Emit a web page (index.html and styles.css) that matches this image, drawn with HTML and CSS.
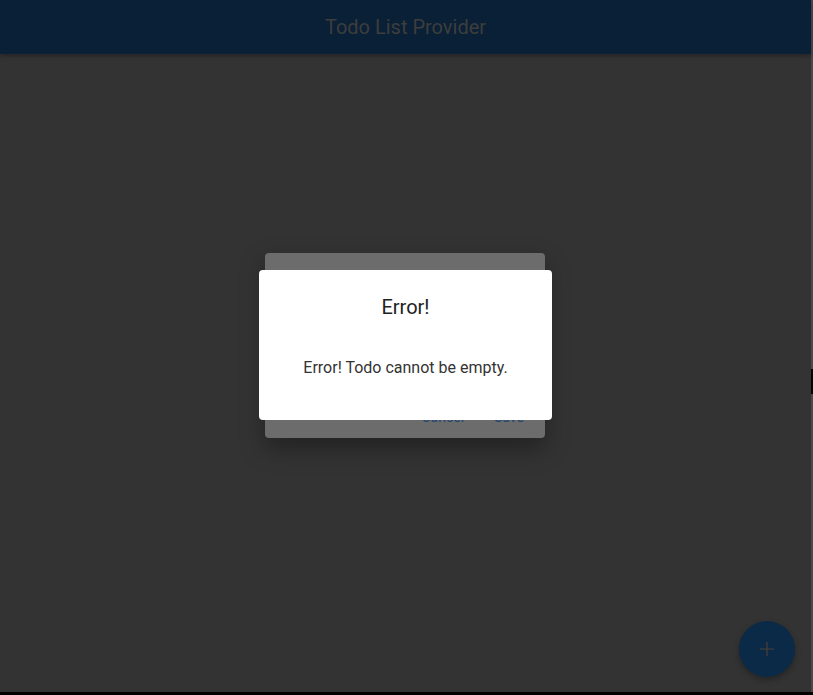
FILE: index.html
```html
<!DOCTYPE html>
<html>
<head>
<meta charset="utf-8">
<link rel="stylesheet" href="styles.css">
</head>
<body>
<div class="app">
  <header class="appbar">Todo List Provider</header>
  <main class="content"></main>
  <div class="dialog-under">
    <div class="actions">
      <span class="btn">Cancel</span>
      <span class="btn">Save</span>
    </div>
  </div>
  <div class="dialog-error">
    <div class="title">Error!</div>
    <div class="message">Error! Todo cannot be empty.</div>
  </div>
  <div class="fab">
    <svg width="16" height="16" viewBox="0 0 16 16"><path d="M8 1v14M1 8h14" stroke="#3a3a3a" stroke-width="1.6" fill="none"/></svg>
  </div>
</div>
<div class="edge"><div class="edge-dark"></div></div>
</body>
</html>
```
FILE: styles.css
```css
html, body {
  margin: 0;
  padding: 0;
  width: 813px;
  height: 695px;
  overflow: hidden;
  background: #000;
  font-family: Roboto, "Noto Sans", sans-serif;
}
body {
  display: flex;
}
.app {
  position: relative;
  width: 811px;
  height: 692px;
  background: #333333;
  display: flex;
  flex-direction: column;
}
.edge {
  width: 2px;
  height: 692px;
  background: #4a4a4a;
  padding-top: 369px;
  box-sizing: border-box;
}
.edge-dark {
  height: 25px;
  background: #000;
}
.appbar {
  height: 53px;
  background: #0a2036;
  color: #3d3d3d;
  font-size: 20px;
  display: flex;
  align-items: center;
  justify-content: center;
  box-shadow: 0 2px 4px rgba(0,0,0,0.3);
  padding-bottom: 1px;
}
.content {
  flex: 1;
}
.dialog-under {
  position: absolute;
  left: 265px;
  top: 253px;
  width: 280px;
  height: 185px;
  background: #6c6c6c;
  border-radius: 4px;
  box-shadow: 0 10px 24px rgba(0,0,0,0.35);
  display: flex;
  flex-direction: column;
  justify-content: flex-end;
}
.actions {
  display: flex;
  justify-content: flex-end;
  gap: 30px;
  padding: 0 21px 13px 0;
  font-size: 14px;
  color: #1f4670;
}
.dialog-error {
  position: absolute;
  left: 259px;
  top: 270px;
  width: 293px;
  height: 150px;
  background: #fff;
  border-radius: 4px;
  text-align: center;
}
.title {
  margin-top: 25px;
  font-size: 20px;
  color: #222;
  line-height: 24px;
}
.message {
  margin-top: 39px;
  font-size: 16px;
  color: #333;
  line-height: 20px;
}
.fab {
  position: absolute;
  left: 739px;
  top: 621px;
  width: 56px;
  height: 56px;
  border-radius: 50%;
  background: #0b2a47;
  box-shadow: 0 3px 6px rgba(0,0,0,0.3);
  display: flex;
  align-items: center;
  justify-content: center;
}
```
